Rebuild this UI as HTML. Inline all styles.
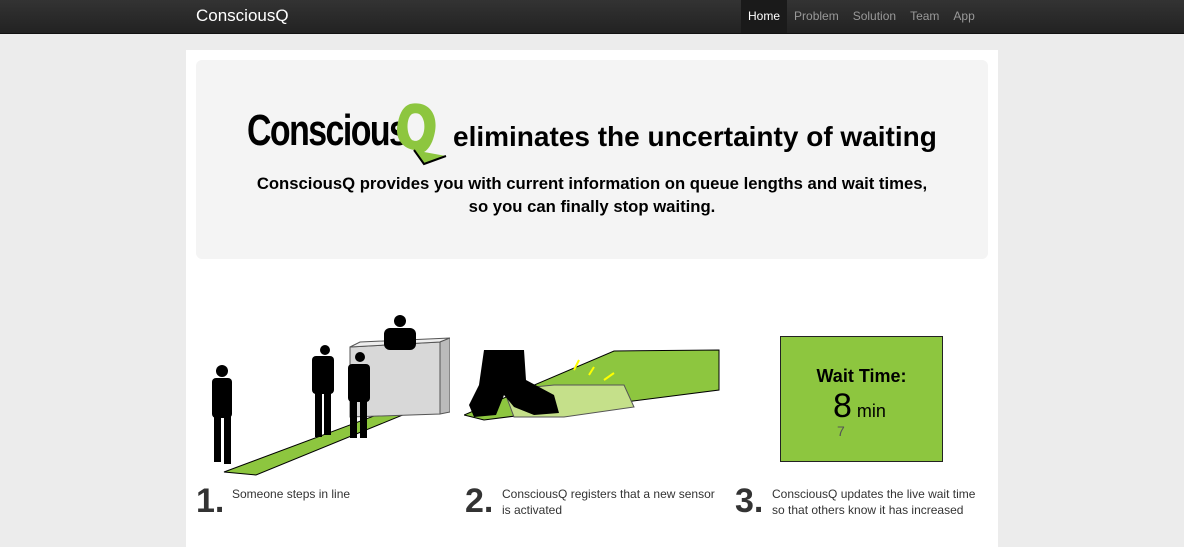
<!DOCTYPE html>
<html><head><meta charset="utf-8"><style>
body{margin:0;width:1184px;height:547px;overflow:hidden;background:#ececec;font-family:"Liberation Sans",Arial,sans-serif;}
.nav{position:absolute;left:0;top:0;width:1184px;height:33px;background:linear-gradient(#333,#222);border-bottom:1px solid #111;}
.brand{position:absolute;left:196px;top:6px;color:#fff;font-size:17px;}
.links{position:absolute;left:741px;top:0;height:33px;display:flex;font-size:12px;}
.links div{padding:0 7px;line-height:33px;color:#999;}
.links .act{background:#1a1a1a;color:#fff;}
.main{position:absolute;left:186px;top:50px;width:812px;height:497px;background:#fff;}
.hero{position:absolute;left:10px;top:10px;width:792px;height:199px;background:#f4f4f4;border-radius:6px;}
.logo{position:absolute;left:51px;top:46px;font-size:44px;font-weight:bold;letter-spacing:-2px;transform:scaleX(.77);transform-origin:left;color:#000;white-space:nowrap;}
.tag{position:absolute;left:257px;top:61px;font-size:28px;font-weight:bold;white-space:nowrap;}
.sub{position:absolute;left:0;width:792px;top:112px;text-align:center;font-size:16.7px;font-weight:bold;line-height:23px;}
.cap{position:absolute;top:436px;font-size:12px;color:#333;line-height:16px;}
.num{position:absolute;top:432px;font-size:34px;font-weight:bold;color:#333;}
</style></head><body>
<div class="nav"><div class="brand">ConsciousQ</div>
<div class="links"><div class="act">Home</div><div>Problem</div><div>Solution</div><div>Team</div><div>App</div></div></div>
<div class="main">
<div class="hero">
<div class="logo">Conscious</div>
<svg style="position:absolute;left:192px;top:40px" width="64" height="66" viewBox="0 0 64 66"><path d="M22 4 C40 0 52 14 46 36 C44 44 40 50 36 52 L58 56 L36 64 L26 50 C14 48 6 38 10 22 C12 12 16 6 22 4 Z M24 14 C18 18 18 34 24 40 C32 44 38 34 36 22 C34 14 30 12 24 14 Z" fill="#8dc63f" fill-rule="evenodd"/><path d="M26 50 L36 64 L58 56" fill="none" stroke="#000" stroke-width="2"/></svg>
<div class="tag">eliminates the uncertainty of waiting</div>
<div class="sub">ConsciousQ provides you with current information on queue lengths and wait times,<br>so you can finally stop waiting.</div>
</div>
<svg style="position:absolute;left:14px;top:262px" width="250" height="165">
<polygon points="24,160 56,163 210,100 190,98" fill="#8dc63f" stroke="#000" stroke-width="1"/>
<polygon points="150,35 240,30 240,102 150,105" fill="#d8d8d8" stroke="#555"/>
<polygon points="150,35 160,30 250,26 240,30" fill="#eee" stroke="#555"/>
<polygon points="240,30 250,26 250,100 240,102" fill="#bbb" stroke="#555"/>
<g fill="#000">
<circle cx="22" cy="59" r="6"/><rect x="12" y="66" width="20" height="40" rx="4"/><rect x="14" y="100" width="7" height="50"/><rect x="24" y="100" width="7" height="52"/>
<circle cx="125" cy="38" r="5"/><rect x="112" y="44" width="22" height="38" rx="4"/><rect x="115" y="80" width="7" height="45"/><rect x="124" y="80" width="7" height="43"/>
<circle cx="160" cy="45" r="5"/><rect x="148" y="52" width="22" height="38" rx="4"/><rect x="150" y="88" width="7" height="38"/><rect x="160" y="88" width="7" height="38"/>
<circle cx="200" cy="9" r="6"/><rect x="184" y="16" width="32" height="22" rx="6"/>
</g></svg>
<svg style="position:absolute;left:278px;top:295px" width="260" height="85">
<polygon points="0,70 20,75 255,45 255,5 150,6" fill="#8dc63f" stroke="#000"/>
<polygon points="40,45 90,40 160,40 170,62 100,72 50,72" fill="#c5e08a" stroke="#555"/>
<path d="M20 5 L60 5 L62 35 L90 50 L95 68 L70 70 L50 62 L40 50 L32 70 L10 72 L5 60 L15 40 Z" fill="#000"/>
<path d="M110 25 L115 15 M125 30 L130 22 M140 35 L150 28" stroke="#ff0" stroke-width="2"/>
</svg>
<div style="position:absolute;left:594px;top:286px;width:161px;height:124px;background:#8dc63f;border:1px solid #222;">
<div style="position:absolute;top:29px;width:100%;text-align:center;font-weight:bold;font-size:18px;">Wait Time:</div>
<div style="position:absolute;top:50px;left:52px;font-size:34px;">8<span style="font-size:18px"> min</span></div>
<div style="position:absolute;top:86px;left:56px;font-size:14px;color:#555;">7</div>
</div>
<div class="num" style="left:10px">1.</div><div class="cap" style="left:46px">Someone steps in line</div>
<div class="num" style="left:279px">2.</div><div class="cap" style="left:316px">ConsciousQ registers that a new sensor<br>is activated</div>
<div class="num" style="left:549px">3.</div><div class="cap" style="left:586px">ConsciousQ updates the live wait time<br>so that others know it has increased</div>
</div>
</body></html>
